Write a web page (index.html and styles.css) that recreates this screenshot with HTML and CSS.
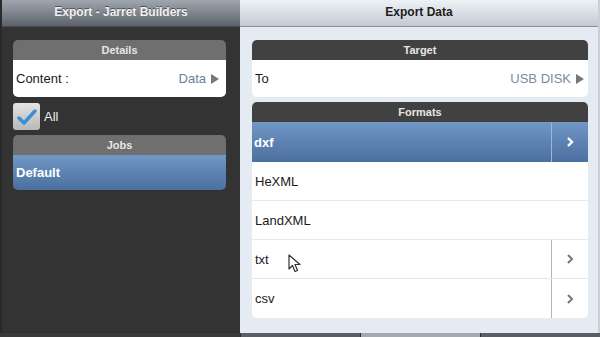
FILE: index.html
```html
<!DOCTYPE html>
<html lang="en">
    <head>
        <meta charset="UTF-8">
        <title>Export Data</title>
        <link rel="stylesheet" href="styles.css">
    </head>
    <body>
        <div class="app">
            <div class="panes">
                <section class="pane-left">
                    <header class="bar bar-dark">Export - Jarret Builders</header>
                    <div class="pane-body">
                        <div class="group">
                            <div class="group-head head-gray">Details</div>
                            <div class="row">
                                <span class="label">Content :</span>
                                <span class="value">Data <span class="tri"></span></span>
                            </div>
                        </div>
                        <div class="check-row">
                            <span class="checkbox">
                                <svg width="20" height="18" viewBox="0 0 20 18"><path d="M2 10 L7 15 L18 3" fill="none" stroke="#3a8fd8" stroke-width="3.5" stroke-linecap="round" stroke-linejoin="round"/></svg>
                            </span>
                            <span class="check-label">All</span>
                        </div>
                        <div class="group">
                            <div class="group-head head-gray">Jobs</div>
                            <div class="row row-selected">Default</div>
                        </div>
                    </div>
                </section>
                <section class="pane-right">
                    <header class="bar bar-light">Export Data</header>
                    <div class="pane-body pane-body-right">
                        <div class="group">
                            <div class="group-head head-dark">Target</div>
                            <div class="row">
                                <span class="label">To</span>
                                <span class="value value-target">USB DISK <span class="tri"></span></span>
                            </div>
                        </div>
                        <div class="group">
                            <div class="group-head head-dark">Formats</div>
                            <div class="row row-selected row-fmt">
                                <span class="fmt-name">dxf</span>
                                <span class="fmt-more"><svg width="8" height="12" viewBox="0 0 8 12"><path d="M2 2 L6 6 L2 10" fill="none" stroke="#fff" stroke-width="2.4"/></svg></span>
                            </div>
                            <div class="row row-fmt"><span class="fmt-name">HeXML</span></div>
                            <div class="row row-fmt"><span class="fmt-name">LandXML</span></div>
                            <div class="row row-fmt">
                                <span class="fmt-name">txt</span>
                                <span class="fmt-more"><svg width="8" height="12" viewBox="0 0 8 12"><path d="M2 2 L6 6 L2 10" fill="none" stroke="#777" stroke-width="2"/></svg></span>
                            </div>
                            <div class="row row-fmt">
                                <span class="fmt-name">csv</span>
                                <span class="fmt-more"><svg width="8" height="12" viewBox="0 0 8 12"><path d="M2 2 L6 6 L2 10" fill="none" stroke="#777" stroke-width="2"/></svg></span>
                            </div>
                        </div>
                    </div>
                    <svg class="cursor" width="14" height="19" viewBox="0 0 14 19"><path d="M1 1 L1 15 L4.5 11.5 L7 17.5 L9.5 16.5 L7 10.5 L12 10.5 Z" fill="#fff" stroke="#333" stroke-width="1.2" stroke-linejoin="round"/></svg>
                </section>
            </div>
            <footer class="tabs">
                <span class="tab tab-left"></span>
                <span class="tab"></span>
                <span class="tab tab-on"></span>
                <span class="tab"></span>
            </footer>
        </div>
    </body>
</html>
```

FILE: styles.css
```css
body
{
    margin: 0;
    width: 600px;
    height: 337px;
    overflow: hidden;
    font-family: "Liberation Sans", Arial, sans-serif;
}
.app
{
    display: flex;
    flex-direction: column;
    height: 337px;
}
.panes
{
    display: flex;
    flex: 1;
}
.pane-left
{
    width: 240px;
    background-color: #333333;
    border-left: 2px solid #2a2a2a;
    box-sizing: border-box;
}
.pane-right
{
    flex: 1;
    position: relative;
    background-color: #e4ebf2;
    border-right: 2px solid #c9d0d6;
}
.bar
{
    height: 27px;
    box-sizing: border-box;
    display: flex;
    align-items: center;
    justify-content: center;
    padding-bottom: 2px;
    font-size: 12px;
    font-weight: bold;
}
.bar-dark
{
    color: #f2f2f2;
    background: linear-gradient(#a0a6ae, #5d636c);
    border-bottom: 1px solid #464a50;
    text-shadow: 0 -1px 0 #4a4e55;
}
.bar-light
{
    color: #1e1e1e;
    background: linear-gradient(#eef2f6, #c2cad2);
    border-bottom: 1px solid #8a9299;
}
.pane-body
{
    padding: 13px 14px 0 11px;
}
.pane-body-right
{
    padding: 13px 10px 0 12px;
}
.group
{
    border-radius: 5px;
    overflow: hidden;
    margin-bottom: 5px;
}
.group-head
{
    height: 20px;
    display: flex;
    align-items: center;
    justify-content: center;
    font-size: 11px;
    font-weight: bold;
    color: #e6e6e6;
}
.head-gray
{
    background-color: #6f6f6f;
}
.head-dark
{
    background-color: #414141;
}
.row
{
    height: 37px;
    box-sizing: border-box;
    display: flex;
    align-items: center;
    justify-content: space-between;
    padding: 0 4px 0 3px;
    background-color: #ffffff;
    font-size: 13px;
    color: #1a1a1a;
}
.value
{
    display: flex;
    align-items: center;
    gap: 5px;
    color: #6b819b;
    padding-right: 3px;
}
.value-target
{
    color: #7b8ba0;
    padding-right: 0;
}
.tri
{
    width: 0;
    height: 0;
    border-top: 5px solid transparent;
    border-bottom: 5px solid transparent;
    border-left: 8px solid #777777;
}
.row-selected
{
    background: linear-gradient(#7097c6, #4b6f9f);
    color: #ffffff;
    font-weight: bold;
    height: 35px;
}
.check-row
{
    display: flex;
    align-items: center;
    gap: 4px;
    height: 33px;
    margin-top: -2px;
    margin-bottom: 2px;
}
.checkbox
{
    width: 27px;
    height: 27px;
    border-radius: 3px;
    background: linear-gradient(#e4e4e4, #b8b8b8);
    display: flex;
    align-items: center;
    justify-content: center;
}
.check-label
{
    color: #eeeeee;
    font-size: 13px;
}
.row-fmt
{
    height: 39px;
    padding: 0;
    border-bottom: 1px solid #e8e8e8;
    align-items: stretch;
}
.row-fmt:last-child
{
    border-bottom: none;
}
.row-fmt.row-selected
{
    height: 40px;
    border-bottom: none;
}
.fmt-name
{
    display: flex;
    align-items: center;
    padding-left: 3px;
}
.row-selected .fmt-name
{
    padding-left: 2px;
}
.fmt-more
{
    width: 36px;
    display: flex;
    align-items: center;
    justify-content: center;
    border-left: 1px solid #b5b5b5;
}
.row-selected .fmt-more
{
    border-left-color: #9fb6d3;
}
.cursor
{
    position: absolute;
    left: 48px;
    top: 254px;
}
.tabs
{
    display: flex;
    height: 4px;
    background-color: #3a3a3a;
}
.tab
{
    flex: 1;
    background-color: #5b5f65;
    border-left: 1px solid #2e2e2e;
}
.tab-left
{
    flex: 0 0 240px;
    background-color: #3a3a3a;
    border-left: none;
}
.tab-on
{
    background-color: #a3a9af;
}
```
